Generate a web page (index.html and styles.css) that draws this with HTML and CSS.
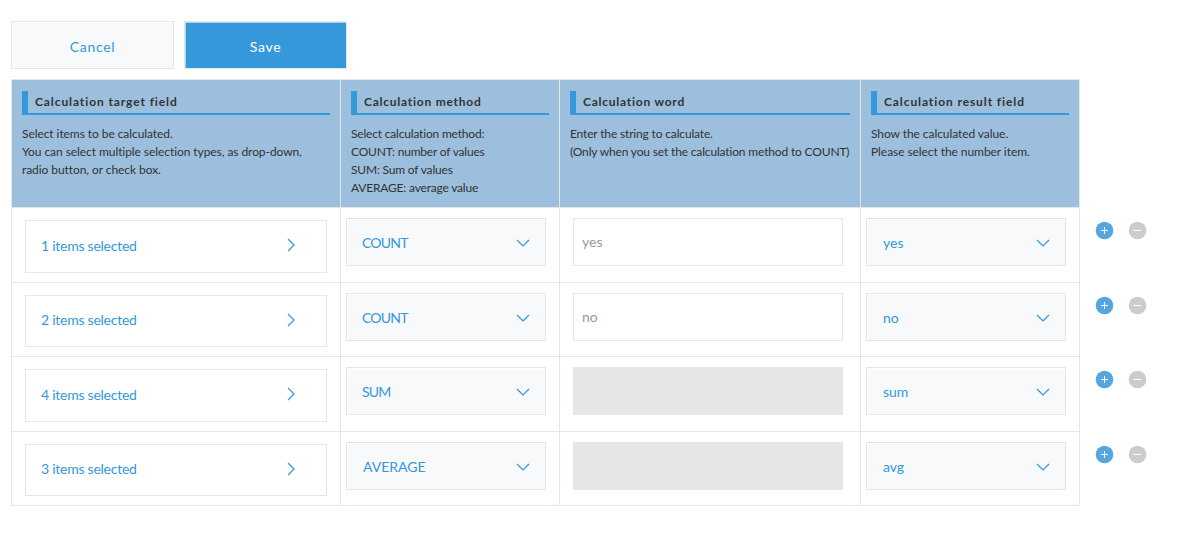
FILE: index.html
```
<!DOCTYPE html>
<html lang="en">
<head>
<meta charset="utf-8">
<title>Calculation settings</title>
<link rel="stylesheet" href="styles.css">
</head>
<body>
<svg class="defs" aria-hidden="true">
  <symbol id="down" viewBox="0 0 14 8"><path d="M1 1 L7 7 L13 1"/></symbol>
  <symbol id="right" viewBox="0 0 8 14"><path d="M1 1 L7 7 L1 13"/></symbol>
  <symbol id="plus" viewBox="0 0 19 19"><circle cx="9.5" cy="9.5" r="8.8"/><path d="M6 9.5H13M9.5 6V13"/></symbol>
  <symbol id="minus" viewBox="0 0 19 19"><circle cx="9.5" cy="9.5" r="8.8"/><path d="M5.5 9.5H13.5"/></symbol>
</svg>
<div class="toolbar">
  <button class="btn btn-cancel">Cancel</button>
  <button class="btn btn-save">Save</button>
</div>
<div class="layout">
  <div class="table">
    <div class="head"><h3 class="title">Calculation target field</h3><p class="desc">Select items to be calculated.<br>You can select multiple selection types, as drop-down,<br>radio button, or check box.</p></div>
    <div class="head"><h3 class="title title-method">Calculation method</h3><p class="desc desc-method">Select calculation method:<br>COUNT: number of values<br>SUM: Sum of values<br>AVERAGE: average value</p></div>
    <div class="head"><h3 class="title title-method">Calculation word</h3><p class="desc desc-word">Enter the string to calculate.<br>(Only when you set the calculation method to COUNT)</p></div>
    <div class="head"><h3 class="title">Calculation result field</h3><p class="desc">Show the calculated value.<br>Please select the number item.</p></div>

    <div class="cell cell-items"><div class="items"><span>1 items selected</span><svg class="right"><use href="#right"/></svg></div></div>
    <div class="cell"><div class="select caps"><span>COUNT</span><svg class="down"><use href="#down"/></svg></div></div>
    <div class="cell cell-word"><div class="word">yes</div></div>
    <div class="cell"><div class="select"><span>yes</span><svg class="down"><use href="#down"/></svg></div></div>

    <div class="cell cell-items"><div class="items"><span>2 items selected</span><svg class="right"><use href="#right"/></svg></div></div>
    <div class="cell"><div class="select caps"><span>COUNT</span><svg class="down"><use href="#down"/></svg></div></div>
    <div class="cell cell-word"><div class="word">no</div></div>
    <div class="cell"><div class="select"><span>no</span><svg class="down"><use href="#down"/></svg></div></div>

    <div class="cell cell-items"><div class="items"><span>4 items selected</span><svg class="right"><use href="#right"/></svg></div></div>
    <div class="cell"><div class="select caps"><span>SUM</span><svg class="down"><use href="#down"/></svg></div></div>
    <div class="cell cell-word"><div class="word disabled"></div></div>
    <div class="cell"><div class="select"><span>sum</span><svg class="down"><use href="#down"/></svg></div></div>

    <div class="cell cell-items"><div class="items"><span>3 items selected</span><svg class="right"><use href="#right"/></svg></div></div>
    <div class="cell"><div class="select"><span>AVERAGE</span><svg class="down"><use href="#down"/></svg></div></div>
    <div class="cell cell-word"><div class="word disabled"></div></div>
    <div class="cell"><div class="select"><span>avg</span><svg class="down"><use href="#down"/></svg></div></div>
  </div>
  <div class="actions">
    <div class="pair"><svg class="add"><use href="#plus"/></svg><svg class="remove"><use href="#minus"/></svg></div>
    <div class="pair"><svg class="add"><use href="#plus"/></svg><svg class="remove"><use href="#minus"/></svg></div>
    <div class="pair"><svg class="add"><use href="#plus"/></svg><svg class="remove"><use href="#minus"/></svg></div>
    <div class="pair"><svg class="add"><use href="#plus"/></svg><svg class="remove"><use href="#minus"/></svg></div>
  </div>
</div>
</body>
</html>
```
FILE: styles.css
```
* { box-sizing: border-box; }
body {
  margin: 0;
  padding: 21px 0 0 11px;
  background: #fff;
  color: #333;
  font-family: Lato, "Noto Sans CJK JP", sans-serif;
}
svg { display: block; flex: none; }
.defs { position: absolute; width: 0; height: 0; }
.toolbar { display: flex; gap: 10px; margin-bottom: 10px; }
.btn {
  width: 163px;
  height: 48px;
  padding: 2px 0 0;
  border: 1px solid #e3e7e8;
  background: #f7f9fa;
  box-shadow: inset 1px 1px 0 #fff;
  color: #3498db;
  font: 400 14px Lato, sans-serif;
  letter-spacing: .7px;
}
.btn-save {
  background: #3498db;
  box-shadow: inset 1px 1px 0 #a9d3ec;
  color: #fff;
}
.layout { display: flex; align-items: flex-start; }
.table {
  display: grid;
  grid-template-columns: 329px 219px 301px 219px;
  grid-template-rows: 128px 75px 74px 75px 74px;
  border: solid #e3e7e8;
  border-width: 0 1px 1px 0;
}
.head, .cell { border: solid #e3e7e8; border-width: 1px 0 0 1px; }
.head { padding: 11px 10px 0; background: #9bbfdd; }
.title {
  height: 24px;
  margin: 0 0 10px;
  padding-left: 7px;
  border-left: 6px solid #3498db;
  border-bottom: 2px solid #3498db;
  font-size: 12px;
  font-weight: 700;
  line-height: 22px;
  letter-spacing: .9px;
  white-space: nowrap;
}
.title-method { letter-spacing: .75px; }
.desc { margin: 0; font-size: 12px; line-height: 18px; letter-spacing: -.07px; white-space: nowrap; }
.desc-method { letter-spacing: -.19px; }
.desc-word { letter-spacing: -.16px; }
.cell { padding: 10px 5px 0; }
.cell-items { padding: 12px 13px 9px; }
.cell-word { padding-left: 13px; }
.items, .select {
  display: flex;
  align-items: center;
  justify-content: space-between;
  border: 1px solid #e3e7e8;
  color: #3498db;
  font-size: 14px;
}
.items { height: 100%; width: 302px; padding: 0 31px 3px 15px; letter-spacing: -.25px; }
.select {
  width: 200px;
  height: 48px;
  padding: 1px 15px 0 16px;
  background: #f7f9fa;
  box-shadow: inset 1px 1px 0 #fff;
}
.caps { padding-left: 15px; letter-spacing: -.8px; }
.down { width: 14px; height: 8px; margin-top: 1px; }
.right { width: 8px; height: 14px; }
#down, #right { fill: none; stroke: #3498db; stroke-width: 1.2; }
.word {
  width: 270px;
  height: 48px;
  padding-left: 8px;
  border: 1px solid #e3e7e8;
  color: #999;
  font-size: 14px;
  line-height: 46px;
}
.disabled { background: #e4e6e8; }
.actions { display: grid; grid-template-rows: 75px 74px 75px 74px; padding: 142px 0 0 15px; }
.pair { display: flex; gap: 14px; }
.pair svg { width: 19px; height: 19px; stroke-width: 1; }
.pair circle { stroke: none; }
#plus path, #minus path { stroke: #fff; }
.add { fill: #55a6e0; }
.remove { fill: #ccc; }
```
